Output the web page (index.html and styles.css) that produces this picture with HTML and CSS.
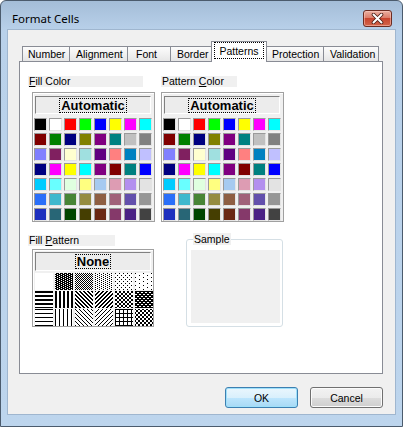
FILE: index.html
```html
<!DOCTYPE html>
<html lang="en">
<head>
    <meta charset="UTF-8">
    <meta name="viewport" content="width=device-width, initial-scale=1.0">
    <title>Format Cells</title>
    <link rel="stylesheet" href="styles.css">
</head>
<body>
    <div class="window">
        <div class="titlebar">
            <span class="title">Format Cells</span>
            <button type="button" class="close-btn" aria-label="Close">
                <svg width="13" height="11" viewBox="0 0 13 11">
                    <path d="M2.5 1.5 L10.5 9.5 M10.5 1.5 L2.5 9.5" stroke="#4a1d15" stroke-width="3.6" stroke-linecap="round"/>
                    <path d="M2.5 1.5 L10.5 9.5 M10.5 1.5 L2.5 9.5" stroke="#ffffff" stroke-width="2" stroke-linecap="round"/>
                </svg>
            </button>
        </div>

        <div class="client">
            <div class="tabs">
                <div class="tab tab-number">Number</div>
                <div class="tab tab-alignment">Alignment</div>
                <div class="tab tab-font">Font</div>
                <div class="tab tab-border">Border</div>
                <div class="tab tab-patterns active"><span class="focus">Patterns</span></div>
                <div class="tab tab-protection">Protection</div>
                <div class="tab tab-validation">Validation</div>
            </div>

            <div class="panel">
                <div class="color-row">
                    <div class="color-col">
                        <div class="label label-fill"><u>F</u>ill Color</div>
                        <div class="palette palette-fill">
                            <div class="auto-btn"><span class="focus">Automatic</span></div>
                            <div class="swatches" id="fillSwatches"></div>
                        </div>
                    </div>
                    <div class="color-col">
                        <div class="label label-pattern">Pattern <u>C</u>olor</div>
                        <div class="palette">
                            <div class="auto-btn"><span class="focus">Automatic</span></div>
                            <div class="swatches" id="patternSwatches"></div>
                        </div>
                    </div>
                </div>

                <div class="pattern-row">
                    <div class="pattern-col">
                        <div class="label label-fillpattern">Fill <u>P</u>attern</div>
                        <div class="pattern-box">
                            <div class="none-btn"><span class="focus">None</span></div>
                            <div class="pattern-grid" id="patternGrid"></div>
                        </div>
                    </div>
                    <fieldset class="sample-group">
                        <legend>Sample</legend>
                        <div class="sample"></div>
                    </fieldset>
                </div>
            </div>

            <div class="btn-row">
                <button type="button" class="btn btn-default">OK</button>
                <button type="button" class="btn">Cancel</button>
            </div>
        </div>
    </div>

    <script>
        // 56-colour workbook palette, row by row
        const palette = [
            '#000000', '#ffffff', '#ff0000', '#00ff00', '#0000ff', '#ffff00', '#ff00ff', '#00ffff',
            '#800000', '#008000', '#000080', '#808000', '#800080', '#008080', '#c0c0c0', '#808080',
            '#8080ff', '#802060', '#ffffd0', '#a0e0e0', '#600080', '#ff8080', '#0080c0', '#c0c0ff',
            '#000080', '#ff00ff', '#ffff00', '#00ffff', '#800080', '#800000', '#008080', '#0000ff',
            '#00ccff', '#69ffff', '#e0ffe0', '#ffff80', '#a6caf0', '#dd9cb3', '#b38fee', '#e3e3e3',
            '#2a6ff9', '#3fb8cd', '#488436', '#958c41', '#8e5e42', '#a0627a', '#624fac', '#969696',
            '#1d2fbe', '#286676', '#004500', '#453e01', '#6a2813', '#85396a', '#4a2285', '#424242'
        ];

        function fillSwatches(id) {
            const grid = document.getElementById(id);
            palette.forEach(color => {
                const cell = document.createElement('div');
                cell.className = 'swatch';
                cell.style.background = color;
                grid.appendChild(cell);
            });
        }

        fillSwatches('fillSwatches');
        fillSwatches('patternSwatches');

        // Fill patterns as pixel tiles: '#' = black, '.' = white
        const patterns = [
            ['.'],
            ['.###', '##.#'],
            ['#.', '.#'],
            ['#...', '..#.'],
            ['#...', '....', '..#.', '....'],
            ['#.......', '........', '....#...', '........'],
            ['####', '####', '....', '....'],
            ['##..', '##..', '##..', '##..'],
            ['##..', '.##.', '..##', '#..#'],
            ['#..#', '..##', '.##.', '##..'],
            ['##..', '##..', '..##', '..##'],
            ['####', '##..', '####', '..##'],
            ['####', '....', '....', '....'],
            ['#...', '#...', '#...', '#...'],
            ['#...', '.#..', '..#.', '...#'],
            ['...#', '..#.', '.#..', '#...'],
            ['####', '#...', '#...', '#...'],
            ['#..#', '.##.', '.##.', '#..#']
        ];

        const patternGrid = document.getElementById('patternGrid');
        patterns.forEach((tile, i) => {
            const w = tile[0].length;
            const h = tile.length;
            let pixels = '';
            tile.forEach((row, y) => {
                row.split('').forEach((px, x) => {
                    if (px === '#') pixels += `<rect x="${x}" y="${y}" width="1" height="1" fill="#000"/>`;
                });
            });
            const cell = document.createElement('div');
            cell.className = 'pattern-cell';
            cell.innerHTML =
                `<svg width="18" height="17" shape-rendering="crispEdges">` +
                `<defs><pattern id="fp${i}" width="${w}" height="${h}" patternUnits="userSpaceOnUse">` +
                `<rect width="${w}" height="${h}" fill="#fff"/>${pixels}</pattern></defs>` +
                `<rect width="18" height="17" fill="url(#fp${i})"/></svg>`;
            patternGrid.appendChild(cell);
        });
    </script>
</body>
</html>
```

FILE: styles.css
```css
* {
    margin: 0;
    padding: 0;
    box-sizing: border-box;
}

body {
    width: 403px;
    height: 427px;
    overflow: hidden;
    font-family: "Liberation Sans", Arial, sans-serif;
    font-size: 10.5px;
    color: #000;
    background: #fff;
}

/* window frame */
.window {
    width: 403px;
    height: 427px;
    display: flex;
    flex-direction: column;
    border: 1px solid #4b5b6d;
    border-radius: 6px 6px 0 0;
    background: linear-gradient(#a4bdd8, #b9d1ea 30px, #bdd5ed);
}

.titlebar {
    height: 29px;
    flex: none;
    display: flex;
    align-items: center;
    justify-content: space-between;
    padding: 5px 10px 0 11px;
}

.title {
    font-family: "Noto Sans", "Open Sans", sans-serif;
    font-size: 11.5px;
    color: #000;
}

.close-btn {
    width: 29px;
    height: 17px;
    display: flex;
    align-items: center;
    justify-content: center;
    border: 1px solid #6b2c22;
    border-radius: 3px;
    background: linear-gradient(#eab0a2, #dc7d6a 45%, #c8452f 50%, #d3654a);
    box-shadow: inset 0 0 0 1px rgba(255, 210, 200, 0.5);
}

.client {
    flex: 1;
    margin: 0 7px 12px;
    padding: 11px 12px 0 11px;
    display: flex;
    flex-direction: column;
    background: #f0f0f0;
    box-shadow: 0 0 0 1px #9fb6cf;
}

/* tab strip */
.tabs {
    height: 20px;
    display: flex;
    align-items: flex-end;
    padding-left: 3px;
}

.tab {
    height: 15px;
    margin-right: -1px;
    padding: 1px 0 0 6px;
    border: 1px solid #898c95;
    border-bottom: none;
    background: linear-gradient(#fcfcfc, #e6e6e6);
    line-height: 13px;
}

.tab-number { width: 48px; padding-left: 5px; }
.tab-alignment { width: 59px; }
.tab-font { width: 44px; padding-left: 8px; }
.tab-border { width: 42px; }
.tab-patterns { width: 56px; }
.tab-protection { width: 58px; padding-left: 5px; }
.tab-validation { width: 56px; }

.tab.active {
    position: relative;
    z-index: 1;
    height: 21px;
    margin-bottom: -1px;
    padding: 0;
    display: flex;
    justify-content: center;
    background: #fff;
}

.tab.active .focus {
    height: 17px;
    padding: 2px 4px 0;
    line-height: 13px;
}

.focus {
    display: inline-block;
    border: 1px dotted #000;
}

/* tab page */
.panel {
    width: 364px;
    height: 313px;
    padding: 14px 0 0 8px;
    border: 1px solid #898c95;
    background: #fff;
}

.label {
    height: 11px;
    padding-left: 1px;
    line-height: 11px;
    background: #f0f0f0;
}

.label-fill { width: 115px; }
.label-pattern { width: 76px; }
.label-fillpattern { width: 87px; }

.color-row {
    display: flex;
    gap: 6px;
}

.palette {
    width: 123px;
    height: 130px;
    margin-top: 5px;
    padding: 3px 2px 0 1px;
    border: 1px solid #a0a0a0;
    background: #f0f0f0;
    box-shadow: inset 1px 1px 0 #fff;
}

.palette-fill {
    margin-left: 4px;
}

.auto-btn,
.none-btn {
    width: 116px;
    display: flex;
    align-items: center;
    justify-content: center;
    border: 1px solid;
    border-color: #808080 #fff #fff #808080;
    background: #ececec;
    font-size: 13px;
    font-weight: bold;
}

.auto-btn {
    height: 18px;
    margin-left: 1px;
}

.none-btn {
    height: 19px;
}

.auto-btn .focus,
.none-btn .focus {
    padding: 0 1px;
    line-height: 13px;
}

.swatches {
    margin-top: 4px;
    display: grid;
    grid-template-columns: repeat(8, 13px);
    grid-auto-rows: 13px;
    gap: 2px;
}

.swatch {
    border: 1px solid;
    border-color: #9a9a9a #e4e4e4 #e4e4e4 #9a9a9a;
}

.pattern-row {
    display: flex;
    margin-top: 13px;
}

.pattern-box {
    width: 122px;
    height: 78px;
    margin: 3px 0 0 4px;
    padding: 2px 0 0 2px;
    border: 1px solid #a0a0a0;
    background: #f0f0f0;
    box-shadow: inset 1px 1px 0 #fff;
}

.pattern-grid {
    margin-top: 2px;
    display: grid;
    grid-template-columns: repeat(6, 18px);
    grid-auto-rows: 17px;
    gap: 1px 2px;
}

.pattern-cell svg {
    display: block;
}

.sample-group {
    width: 97px;
    height: 94px;
    margin: -2px 0 0 32px;
    padding: 5px 2px 3px 4px;
    border: 1px solid #d5dfe5;
    border-radius: 3px;
}

.sample-group legend {
    margin-left: 2px;
    padding: 0 1px;
    line-height: 12px;
    background: #f0f0f0;
}

.sample {
    width: 89px;
    height: 73px;
    background: #f0f0f0;
}

/* dialog buttons */
.btn-row {
    display: flex;
    justify-content: flex-end;
    gap: 12px;
    margin-top: 13px;
}

.btn {
    width: 73px;
    height: 21px;
    border: 1px solid #707070;
    border-radius: 3px;
    background: linear-gradient(#f2f2f2, #ebebeb 50%, #dddddd 50%, #cfcfcf);
    box-shadow: inset 0 0 0 1px #fbfbfb;
    font-family: inherit;
    font-size: 10.5px;
    color: #000;
}

.btn-default {
    border-color: #3c7fb1;
    background: linear-gradient(#eaf6fd, #d9f0fc 50%, #bee6fd 50%, #a7d9f5);
    box-shadow: inset 0 0 0 1px #9ee0fa;
}
```
